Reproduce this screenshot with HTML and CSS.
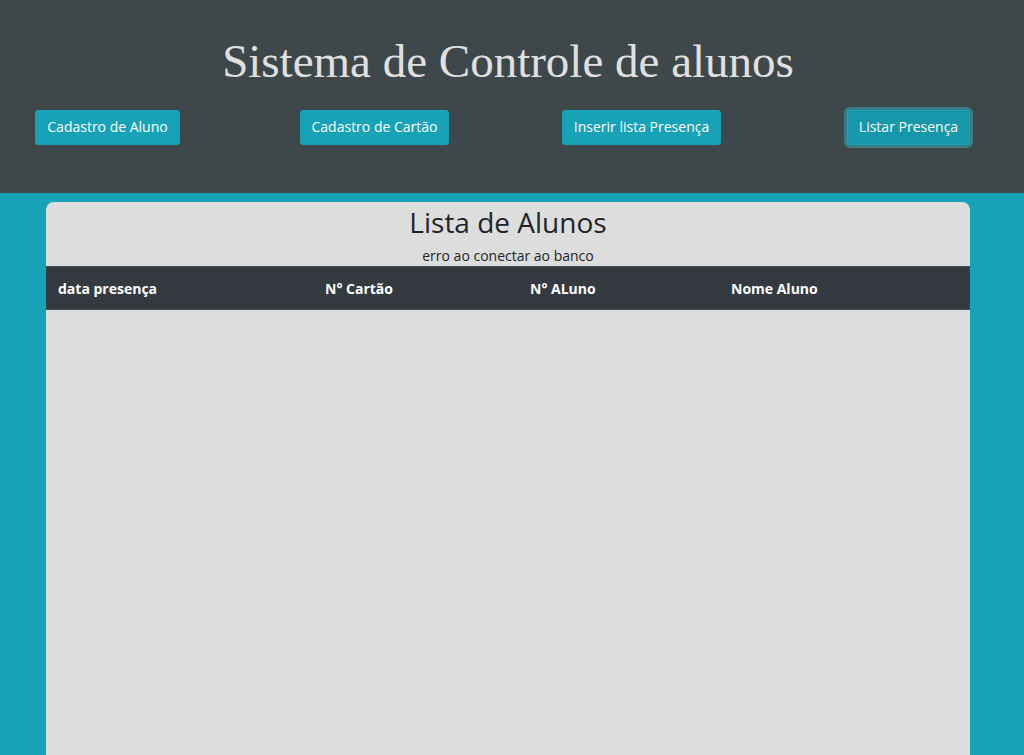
FILE: index.html
```html
<!DOCTYPE html>
<html lang="pt-br">
<head>
    <meta charset="UTF-8">
    <meta name="viewport" content="width=device-width, initial-scale=1.0">
    <title>Sistema de Controle de alunos</title>
    <link rel="stylesheet" href="styles.css">
</head>
<body>

<header class="topo">
    <h1>Sistema de Controle de alunos</h1>
    <nav class="menu">
        <div class="menu-item"><button class="btn">Cadastro de Aluno</button></div>
        <div class="menu-item"><button class="btn">Cadastro de Cartão</button></div>
        <div class="menu-item"><button class="btn">Inserir lista Presença</button></div>
        <div class="menu-item"><button class="btn btn-focus">Listar Presença</button></div>
    </nav>
</header>

<main class="conteudo">
    <div class="card">
        <h2>Lista de Alunos</h2>
        <p class="msg">erro ao conectar ao banco</p>
        <table class="tabela">
            <thead>
                <tr>
                    <th class="col-data">data presença</th>
                    <th class="col-cartao">N° Cartão</th>
                    <th class="col-aluno">N° ALuno</th>
                    <th>Nome Aluno</th>
                </tr>
            </thead>
            <tbody></tbody>
        </table>
    </div>
</main>

</body>
</html>
```

FILE: styles.css
```css
body {
    margin: 0;
    background: #17a2b8;
    font-family: "Open Sans", "Noto Sans", Arial, sans-serif;
    color: #212529;
}
.topo {
    background: #3e484a;
    height: 193px;
    padding-top: 1px;
    box-sizing: border-box;
}
.topo h1 {
    font-family: "Liberation Serif", "Times New Roman", serif;
    font-weight: normal;
    font-size: 47px;
    color: #e0e0e0;
    text-align: center;
    margin: 34px 8px 0 0;
    line-height: 52px;
}
.menu {
    display: grid;
    grid-template-columns: repeat(4, 267px);
    justify-content: center;
    padding-right: 8px;
    margin-top: 23px;
}
.menu-item {
    display: flex;
    justify-content: center;
}
.btn {
    font-family: "Open Sans", "Noto Sans", Arial, sans-serif;
    font-size: 14px;
    line-height: 20px;
    padding: 6px 11px 7px;
    color: #fff;
    background: #17a2b8;
    border: 1px solid #17a2b8;
    border-radius: 3px;
}
.btn-focus {
    background: #1797ab;
    box-shadow: 0 0 0 3px rgba(58, 176, 195, 0.5);
}
.conteudo {
    padding: 9px 54px 0 46px;
}
.card {
    background: #dddddd;
    border-radius: 8px 8px 0 0;
    min-height: 560px;
    padding-top: 1px;
}
.card h2 {
    font-weight: 500;
    font-size: 28px;
    text-align: center;
    margin: 1px 0 0;
    line-height: 36px;
}
.msg {
    text-align: center;
    font-size: 14px;
    margin: 6px 0 0;
    line-height: 20px;
}
.tabela {
    width: 100%;
    border-collapse: collapse;
}
.tabela th {
    background: #343a40;
    color: #fff;
    text-align: left;
    font-size: 14px;
    font-weight: bold;
    padding: 11px 12px;
    height: 20px;
    border-top: 1px solid #454d55;
    border-bottom: 1px solid #454d55;
}
.col-data {
    width: 243px;
}
.col-cartao {
    width: 181px;
}
.col-aluno {
    width: 177px;
}
```
